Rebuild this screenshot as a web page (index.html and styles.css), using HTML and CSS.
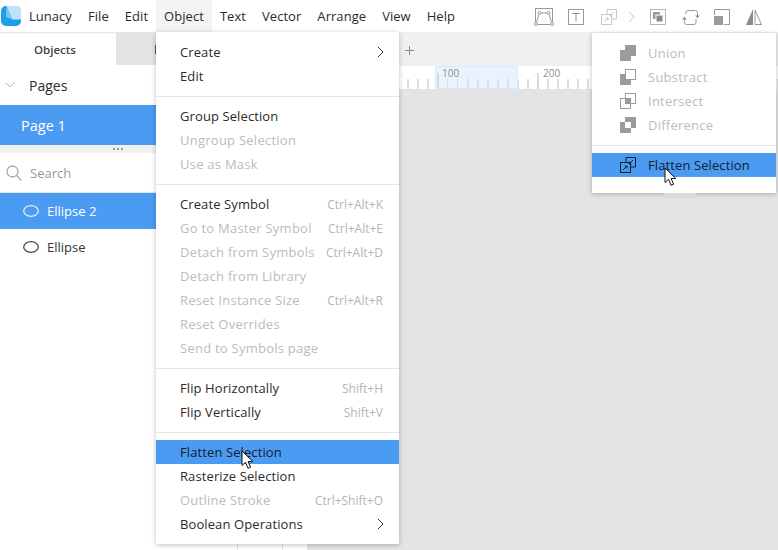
FILE: index.html
```html
<!DOCTYPE html>
<html lang="en">
<head>
    <meta charset="UTF-8">
    <meta name="viewport" content="width=device-width, initial-scale=1.0">
    <title>Lunacy</title>
    <link rel="stylesheet" href="styles.css">
</head>
<body>
    <!-- Title bar -->
    <header class="topbar">
        <svg class="logo" width="22" height="22" viewBox="0 0 22 22">
            <rect x="1" y="1" width="20" height="20" rx="5" fill="#1b9fe6"/>
            <path d="M6.500 1H16a5 5 0 0 1 5 5v8.500H12z" fill="#bfe3f8"/>
            <path d="M6.500 1 13 14.500 6 12z" fill="#7cc8f2"/>
        </svg>
        <span class="app-name">Lunacy</span>
        <nav class="mainmenu">
            <span>File</span>
            <span>Edit</span>
            <span class="open">Object</span>
            <span>Text</span>
            <span>Vector</span>
            <span>Arrange</span>
            <span>View</span>
            <span>Help</span>
        </nav>
        <div class="toolbar">
            <svg class="tool" width="20" height="18" viewBox="0 0 20 18" fill="none" stroke="#999">
                <path d="M1.500 14V.5h17V14"/>
                <path d="M2 16 5.500 5h9L18 16M3.500 16.500h13" />
                <circle cx="2" cy="16" r="1.500" fill="#fff"/>
                <circle cx="5.500" cy="5" r="1.500" fill="#fff"/>
                <circle cx="14.500" cy="5" r="1.500" fill="#fff"/>
                <circle cx="18" cy="16" r="1.500" fill="#fff"/>
            </svg>
            <svg class="tool" width="16" height="16" viewBox="0 0 16 16" fill="none" stroke="#999">
                <rect x=".5" y=".5" width="15" height="15"/>
                <path d="M4 4.500h8M8 4.500v8"/>
            </svg>
            <svg class="tool" width="16" height="16" viewBox="0 0 16 16" fill="none" stroke="#c8c8c8">
                <path d="M6 5.500V.5h9.500V10H10.500"/>
                <rect x=".5" y="5.500" width="10" height="10"/>
                <path d="M3 13l4-4M4.500 9H7v2.500M13 3 9 7M9 4.500V7h2.500"/>
            </svg>
            <svg class="tool" width="7" height="12" viewBox="0 0 7 12" fill="none" stroke="#c8c8c8">
                <path d="M1 1l5 5-5 5"/>
            </svg>
            <svg class="tool" width="16" height="16" viewBox="0 0 16 16">
                <rect x=".5" y=".5" width="15" height="15" fill="none" stroke="#b4b4b4"/>
                <rect x="3" y="3" width="7" height="7" fill="#9a9a9a"/>
                <rect x="6" y="6" width="7" height="7" fill="#8a8a8a" stroke="#fff"/>
            </svg>
            <svg class="tool" width="18" height="17" viewBox="0 0 18 17" fill="none" stroke="#999">
                <path d="M4 5V3.500A2 2 0 0 1 6 1.500h7.500a2 2 0 0 1 2 2V7"/>
                <path d="M14 10v3.500a2 2 0 0 1-2 2H4.500a2 2 0 0 1-2-2V10"/>
                <path d="M13 6.500h5l-2.500 2.500zM0 10.500h5L2.500 8z" fill="#8c8c8c" stroke="none"/>
            </svg>
            <svg class="tool" width="16" height="16" viewBox="0 0 16 16">
                <rect y="7" width="9" height="9" fill="#9a9a9a"/>
                <path d="M.5 6V.5h15v15H10" fill="none" stroke="#999"/>
            </svg>
            <svg class="tool" width="16" height="16" viewBox="0 0 16 16">
                <path d="M7 0v16H0z" fill="#8c8c8c"/>
                <path d="M9 1v14.500h6.500z" fill="none" stroke="#999"/>
            </svg>
        </div>
    </header>

    <div class="workspace">
        <!-- Left panel -->
        <aside class="sidebar">
            <div class="tabs">
                <div class="tab active">Objects</div>
                <div class="tab tab-hidden"></div>
            </div>
            <div class="pages-head">
                <svg width="10" height="6" viewBox="0 0 10 6" fill="none" stroke="#b5b5b5"><path d="M.5.500 5 5 9.500.500"/></svg>
                <span>Pages</span>
            </div>
            <div class="page-row">Page 1</div>
            <div class="splitter">
                <svg width="10" height="2" viewBox="0 0 10 2" fill="#999"><rect width="2" height="2"/><rect x="4" width="2" height="2"/><rect x="8" width="2" height="2"/></svg>
            </div>
            <div class="search">
                <svg width="16" height="16" viewBox="0 0 16 16" fill="none" stroke="#a8a8a8" stroke-width="1.300">
                    <circle cx="6.500" cy="6.500" r="5.500"/>
                    <path d="M10.500 10.500 15.500 15.500"/>
                </svg>
                <span>Search</span>
            </div>
            <div class="layer selected">
                <svg width="16" height="12" viewBox="0 0 16 12" fill="none" stroke="#e4f0fd" stroke-width="1.300"><ellipse cx="8" cy="6" rx="7.300" ry="5.300"/></svg>
                <span>Ellipse 2</span>
            </div>
            <div class="layer">
                <svg width="16" height="12" viewBox="0 0 16 12" fill="none" stroke="#444" stroke-width="1.300"><ellipse cx="8" cy="6" rx="7.300" ry="5.300"/></svg>
                <span>Ellipse</span>
            </div>
            <div class="sidebar-foot">
                <span class="foot-cell"></span>
                <span class="foot-cell"></span>
            </div>
        </aside>

        <!-- Canvas -->
        <main class="stage">
            <div class="doc-tabs">
                <svg class="plus" width="9" height="9" viewBox="0 0 9 9" stroke="#8a8a8a"><path d="M0 4.500h9M4.500 0v9"/></svg>
            </div>
            <div class="ruler">
                <span class="ruler-sel"></span>
                <span class="ruler-num num-100">100</span>
                <span class="ruler-num num-200">200</span>
            </div>
            <div class="canvas"></div>
        </main>
    </div>

    <!-- Object menu -->
    <div class="menu object-menu">
        <div class="item"><span>Create</span><svg class="arrow" width="7" height="12" viewBox="0 0 7 12" fill="none" stroke="#333"><path d="M1 1l5 5-5 5"/></svg></div>
        <div class="item"><span>Edit</span></div>
        <hr>
        <div class="item"><span>Group Selection</span></div>
        <div class="item off"><span>Ungroup Selection</span></div>
        <div class="item off"><span>Use as Mask</span></div>
        <hr>
        <div class="item"><span>Create Symbol</span><small>Ctrl+Alt+K</small></div>
        <div class="item off"><span>Go to Master Symbol</span><small>Ctrl+Alt+E</small></div>
        <div class="item off"><span>Detach from Symbols</span><small>Ctrl+Alt+D</small></div>
        <div class="item off"><span>Detach from Library</span></div>
        <div class="item off"><span>Reset Instance Size</span><small>Ctrl+Alt+R</small></div>
        <div class="item off"><span>Reset Overrides</span></div>
        <div class="item off"><span>Send to Symbols page</span></div>
        <hr>
        <div class="item"><span>Flip Horizontally</span><small>Shift+H</small></div>
        <div class="item"><span>Flip Vertically</span><small>Shift+V</small></div>
        <hr>
        <div class="item hot"><span>Flatten Selection</span></div>
        <div class="item"><span>Rasterize Selection</span></div>
        <div class="item off"><span>Outline Stroke</span><small>Ctrl+Shift+O</small></div>
        <div class="item"><span>Boolean Operations</span><svg class="arrow" width="7" height="12" viewBox="0 0 7 12" fill="none" stroke="#333"><path d="M1 1l5 5-5 5"/></svg></div>
    </div>

    <!-- Flatten dropdown -->
    <div class="menu flatten-menu">
        <div class="item off">
            <svg width="16" height="16" viewBox="0 0 16 16" fill="#9b9b9b"><path d="M5 0h11v11h-5v5H0V5h5z"/></svg>
            <span>Union</span>
        </div>
        <div class="item off">
            <svg width="16" height="16" viewBox="0 0 16 16"><path d="M0 5h11v11H0z" fill="#9b9b9b"/><rect x="5.500" y=".5" width="10" height="10" fill="#fff" stroke="#9b9b9b"/></svg>
            <span>Substract</span>
        </div>
        <div class="item off">
            <svg width="16" height="16" viewBox="0 0 16 16"><rect x=".5" y="5.500" width="10" height="10" fill="#fff" stroke="#9b9b9b"/><rect x="5.500" y=".5" width="10" height="10" fill="none" stroke="#9b9b9b"/><rect x="5" y="5" width="6" height="6" fill="#9b9b9b"/></svg>
            <span>Intersect</span>
        </div>
        <div class="item off">
            <svg width="16" height="16" viewBox="0 0 16 16" fill="#9b9b9b"><path d="M5 0h11v11h-5V5H5zM0 5h5v6h6v5H0z"/></svg>
            <span>Difference</span>
        </div>
        <hr>
        <div class="item hot">
            <svg width="16" height="16" viewBox="0 0 16 16" fill="none" stroke="#14202c">
                <path d="M6 5.500V.5h9.500V10H10.500"/>
                <rect x=".5" y="5.500" width="10" height="10"/>
                <path d="M3 13l4-4M4.500 9H7v2.500M13 3 9 7M9 4.500V7h2.500"/>
            </svg>
            <span>Flatten Selection</span>
        </div>
    </div>
    <div class="menu-shade"></div>

    <svg class="cursor cursor-main" width="14" height="20" viewBox="0 0 14 20">
        <path d="M1 1v14.500l3.500-3.200 2.500 6 2.600-1.100-2.500-5.700h4.700z" fill="#fff" stroke="#111"/>
    </svg>
    <svg class="cursor cursor-sub" width="14" height="20" viewBox="0 0 14 20">
        <path d="M1 1v14.500l3.500-3.200 2.500 6 2.600-1.100-2.500-5.700h4.700z" fill="#fff" stroke="#111"/>
    </svg>
</body>
</html>
```

FILE: styles.css
```css
/* General Styling */
body {
    font-family: "Open Sans", "Noto Sans", sans-serif;
    font-size: 13px;
    color: #2b2b2b;
    margin: 0;
    width: 778px;
    height: 550px;
    overflow: hidden;
    position: relative;
    background: #fff;
}

/* Title bar */
.topbar {
    height: 32px;
    display: flex;
    align-items: center;
    box-shadow: 0 1px 1px #e8e8e8;
    position: relative;
}
.logo {
    margin-right: 7px;
}
.app-name {
    width: 51px;
}
.mainmenu {
    display: flex;
    align-self: stretch;
}
.mainmenu span {
    padding: 0 8px;
    line-height: 32px;
    letter-spacing: .05px;
}
.mainmenu .open {
    background: #f3f3f3;
}
.toolbar {
    position: absolute;
    right: 0;
    top: 1px;
    height: 32px;
    display: flex;
    align-items: center;
}
.tool:nth-child(1) { margin-right: 14px; }
.tool:nth-child(2) { margin-right: 17px; }
.tool:nth-child(3) { margin-right: 11px; }
.tool:nth-child(4) { margin-right: 15px; }
.tool:nth-child(5) { margin-right: 16px; }
.tool:nth-child(6) { margin-right: 14px; }
.tool:nth-child(7) { margin-right: 16px; }
.tool:nth-child(8) { margin-right: 16px; }

/* Layout below the title bar */
.workspace {
    display: flex;
    height: 518px;
}
.sidebar {
    width: 307px;
    flex: none;
    display: flex;
    flex-direction: column;
}
.tabs {
    display: flex;
    height: 33px;
    background: #e4e4e4;
    font-size: 11.500px;
    font-weight: 600;
}
.tab {
    line-height: 35px;
    box-sizing: border-box;
}
.tab.active {
    width: 116px;
    padding-left: 34px;
    background: #fff;
    color: #444;
}
/* only the first pixel of this tab's label shows beside the open menu */
.tab-hidden {
    width: 40px;
    display: flex;
    align-items: center;
    justify-content: flex-end;
    padding-top: 2px;
}
.tab-hidden::after {
    content: "";
    width: 1px;
    height: 9px;
    background: #555;
}
.pages-head {
    height: 40px;
    display: flex;
    align-items: center;
    gap: 14px;
    padding-left: 5px;
    font-size: 14px;
}
.page-row {
    height: 40px;
    line-height: 42px;
    padding-left: 21px;
    background: #4a9bf1;
    color: #fff;
    font-size: 14.500px;
}
.splitter {
    height: 8px;
    background: #f0f0f0;
    display: flex;
    align-items: center;
    padding-left: 113px;
}
.search {
    height: 40px;
    display: flex;
    align-items: center;
    gap: 8px;
    padding-left: 6px;
    color: #9a9a9a;
    border-bottom: 1px solid #e8e8e8;
    box-sizing: border-box;
}
.layer {
    height: 36px;
    display: flex;
    align-items: center;
    gap: 8px;
    padding-left: 23px;
    color: #333;
}
.layer.selected {
    background: #4a9bf1;
    color: #fff;
}
.sidebar-foot {
    margin-top: auto;
    height: 24px;
    display: flex;
    padding-left: 237px;
}
.foot-cell {
    width: 45px;
    border-left: 1px solid #e4e4e4;
}
.foot-cell + .foot-cell {
    width: 24px;
}

/* Canvas */
.stage {
    flex: 1;
    display: flex;
    flex-direction: column;
}
.doc-tabs {
    height: 34px;
    background: #f0f0f0;
    position: relative;
}
.plus {
    position: absolute;
    left: 98px;
    top: 14px;
}
.ruler {
    height: 23px;
    position: relative;
    background-color: #fff;
    background-image:
        repeating-linear-gradient(90deg, transparent 0 30px, #d8d8d8 30px 32px, transparent 32px 100px),
        repeating-linear-gradient(90deg, #dedede 0 1.500px, transparent 1.500px 10px);
    background-size: 100% 16px, 100% 10px;
    background-position: 0 100%, 0 100%;
    background-repeat: no-repeat;
}
.ruler-sel {
    position: absolute;
    left: 128px;
    top: 0;
    width: 83px;
    height: 23px;
    background: rgba(200, 225, 250, .4);
    border: 1px solid #dcebfb;
    box-sizing: border-box;
}
.ruler-num {
    position: absolute;
    top: 0;
    font-size: 10px;
    color: #8d8d8d;
}
.num-100 { left: 135px; }
.num-200 { left: 236px; }
.canvas {
    flex: 1;
    background: #e4e4e4;
}

/* Menus */
.menu {
    position: absolute;
    background: #fff;
    box-shadow: 0 1px 5px rgba(0, 0, 0, .25);
}
.object-menu {
    left: 156px;
    top: 32px;
    width: 243px;
    padding: 8px 0;
    box-sizing: border-box;
}
.flatten-menu {
    left: 592px;
    top: 33px;
    width: 184px;
    height: 160px;
    padding-top: 8px;
    box-sizing: border-box;
}
.menu-shade {
    position: absolute;
    left: 664px;
    top: 193px;
    width: 32px;
    height: 5px;
    background: #d9d9d9;
}
.item {
    height: 24px;
    display: flex;
    align-items: center;
    padding: 0 16px 0 24px;
    color: #2b2b2b;
    letter-spacing: .1px;
}
.item small {
    margin-left: auto;
    font-size: 12px;
    letter-spacing: 0;
    color: #b5b5b5;
}
.item .arrow {
    margin: 0 -1px 0 auto;
}
.item.off {
    color: #bcbcbc;
    letter-spacing: .25px;
}
.item.hot {
    background: #4a9bf1;
    color: #14202c;
}
.menu hr {
    border: 0;
    border-top: 1px solid #e4e4e4;
    margin: 8px 0 7px;
}
.flatten-menu .item {
    padding-left: 28px;
    gap: 12px;
}
.cursor {
    position: absolute;
}
.cursor-main {
    left: 241px;
    top: 450px;
}
.cursor-sub {
    left: 664px;
    top: 167px;
}
```
